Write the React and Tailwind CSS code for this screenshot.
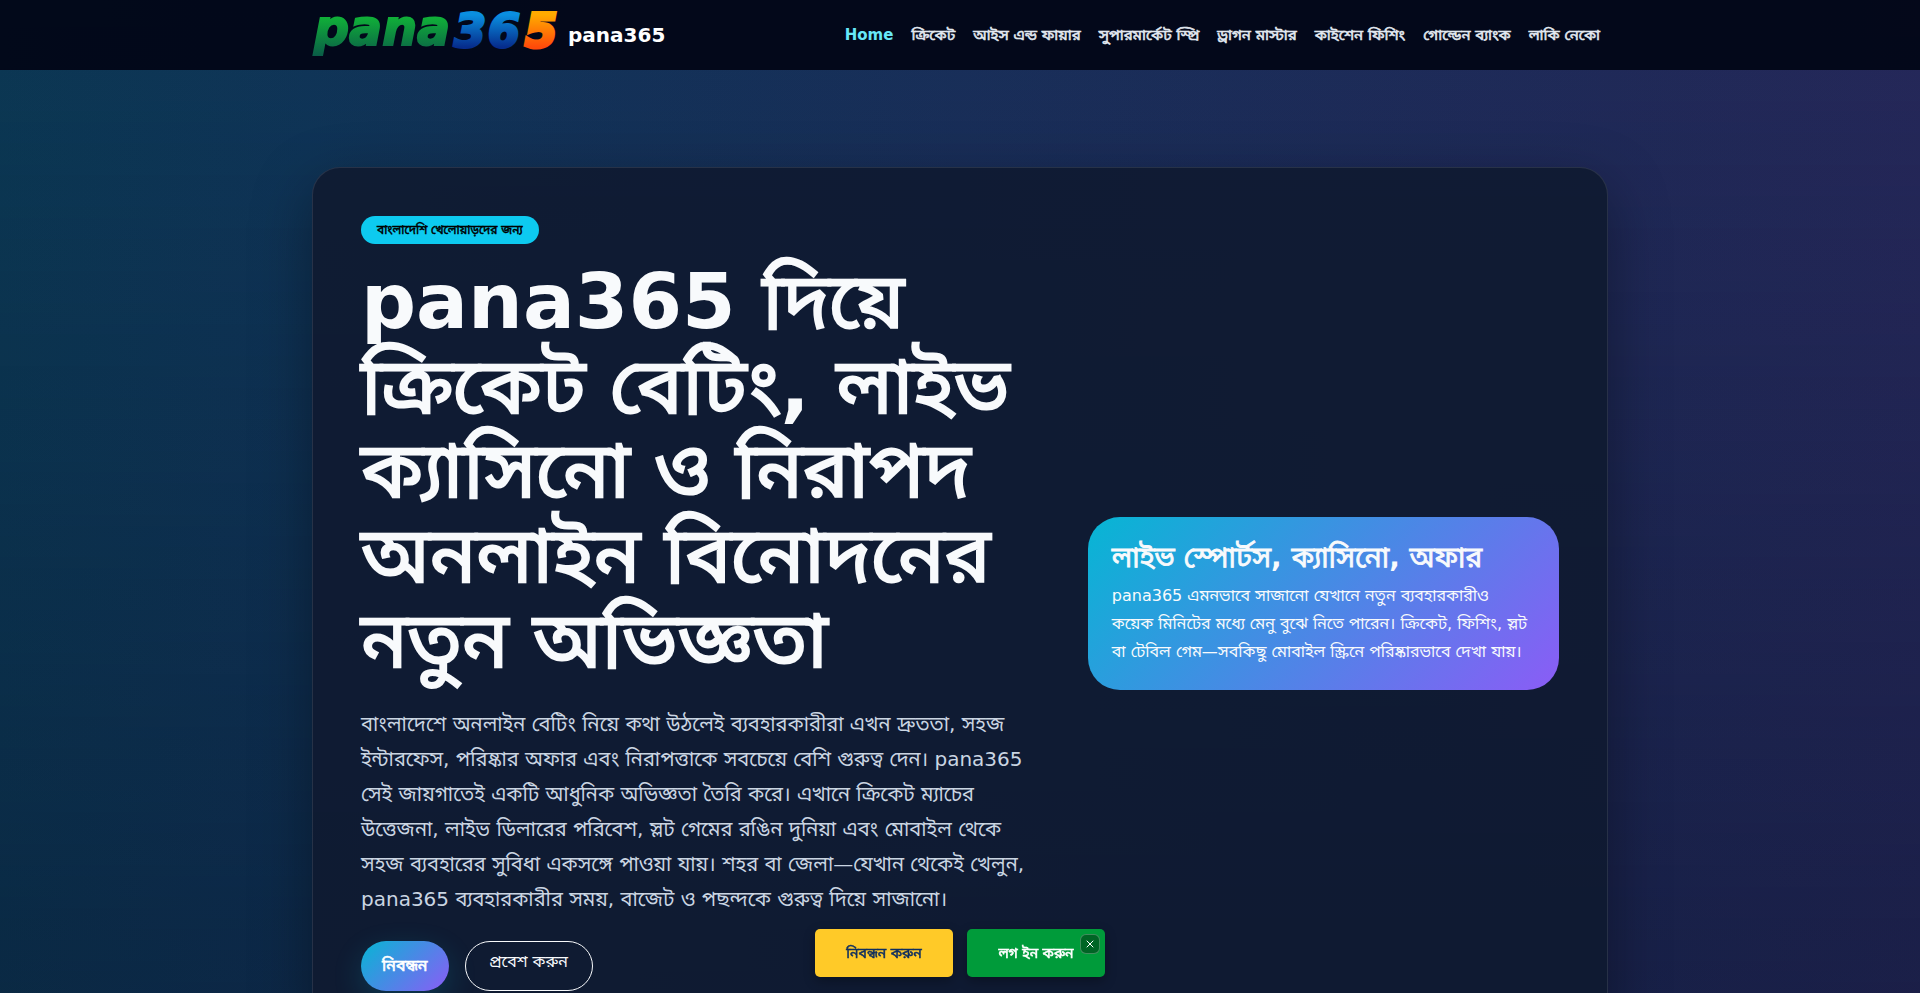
import React from 'react';
import { X } from 'lucide-react';

const navLinks = [
  'ক্রিকেট',
  'আইস এন্ড ফায়ার',
  'সুপারমার্কেট স্প্রি',
  'ড্রাগন মাস্টার',
  'কাইশেন ফিশিং',
  'গোল্ডেন ব্যাংক',
  'লাকি নেকো',
];

// Brand logo, green / blue / orange italic wordmark
const Logo = () => (
  <svg
    width="248"
    height="60"
    viewBox="0 0 248 60"
    className="overflow-visible"
    role="img"
    aria-label="pana365 logo"
  >
    <defs>
      <linearGradient id="logoGreen" x1="0" y1="0" x2="0" y2="1">
        <stop offset="0.3" stopColor="#10b038" />
        <stop offset="1" stopColor="#0a5a48" />
      </linearGradient>
      <linearGradient id="logoBlue" x1="0" y1="0" x2="0" y2="1">
        <stop offset="0.2" stopColor="#0a8fe0" />
        <stop offset="0.8" stopColor="#062c8c" />
      </linearGradient>
      <linearGradient id="logoOrange" x1="0" y1="0" x2="0" y2="1">
        <stop offset="0.2" stopColor="#ffab00" />
        <stop offset="0.8" stopColor="#ff4a0a" />
      </linearGradient>
    </defs>
    <g fontFamily="'DejaVu Sans', sans-serif" fontWeight="700" fontStyle="italic" strokeWidth="2">
      <text x="2" y="40" fontSize="49" fill="url(#logoGreen)" stroke="url(#logoGreen)">pana</text>
      <text x="142" y="42" fontSize="46" strokeWidth="3" fill="url(#logoBlue)" stroke="url(#logoBlue)">3</text>
      <text x="176" y="42" fontSize="46" strokeWidth="3" fill="url(#logoBlue)" stroke="url(#logoBlue)">6</text>
      <text x="213" y="42" fontSize="46" strokeWidth="4" fill="url(#logoOrange)" stroke="url(#logoOrange)">5</text>
    </g>
  </svg>
);

const Header = () => (
  <header className="sticky top-0 z-10 bg-[#020617]/95">
    <div className="mx-auto flex h-[70px] max-w-[1320px] items-center justify-between px-3">
      <a href="#home" className="flex items-center gap-2 text-xl font-bold text-white">
        <Logo />
        <span>pana365</span>
      </a>
      <nav className="flex gap-[2px] text-[15px] text-slate-200">
        <a href="#home" className="p-2 font-bold text-[#67e8f9]">Home</a>
        {navLinks.map((label) => (
          <a key={label} href="#games" className="p-2 [-webkit-text-stroke:0.04em]">{label}</a>
        ))}
      </nav>
    </div>
  </header>
);

const Hero = () => (
  <section className="px-3 pt-[97px] pb-24">
    <div className="mx-auto max-w-[1296px] rounded-[28px] border border-white/10 bg-[#0f1a31]/92 p-12 shadow-[0_20px_60px_rgba(0,0,0,0.35)]">
      <div className="grid grid-cols-12 items-center gap-12">
        <div className="col-span-7">
          <span className="inline-block rounded-full bg-[#0dcaf0] px-4 py-2 text-xs leading-3 text-black [-webkit-text-stroke:0.04em]">
            বাংলাদেশি খেলোয়াড়দের জন্য
          </span>
          <h1 className="mt-4 mb-6 text-[77px] leading-[1.1] [-webkit-text-stroke:0.03em]">
            <span className="font-bold [-webkit-text-stroke:0]">pana365 </span>
            দিয়ে ক্রিকেট বেটিং<b className="[-webkit-text-stroke:0]">, </b>লাইভ ক্যাসিনো ও নিরাপদ
            অনলাইন বিনোদনের নতুন অভিজ্ঞতা
          </h1>
          <p className="mb-6 text-xl leading-[35px] text-slate-300">
            বাংলাদেশে অনলাইন বেটিং নিয়ে কথা উঠলেই ব্যবহারকারীরা এখন দ্রুততা, সহজ ইন্টারফেস, পরিষ্কার
            অফার এবং নিরাপত্তাকে সবচেয়ে বেশি গুরুত্ব দেন। pana365 সেই জায়গাতেই একটি আধুনিক অভিজ্ঞতা
            তৈরি করে। এখানে ক্রিকেট ম্যাচের উত্তেজনা, লাইভ ডিলারের পরিবেশ, স্লট গেমের রঙিন দুনিয়া এবং
            মোবাইল থেকে সহজ ব্যবহারের সুবিধা একসঙ্গে পাওয়া যায়। শহর বা জেলা—যেখান থেকেই খেলুন,
            pana365 ব্যবহারকারীর সময়, বাজেট ও পছন্দকে গুরুত্ব দিয়ে সাজানো।
          </p>
          <div className="flex gap-4">
            <button
              type="button"
              className="h-[50px] rounded-full bg-[linear-gradient(135deg,#06b6d4,#8b5cf6)] px-[21px] text-white shadow-[0_10px_30px_rgba(6,182,212,0.2)] [-webkit-text-stroke:0.04em]"
            >
              নিবন্ধন
            </button>
            <button type="button" className="h-[50px] rounded-full border border-slate-50 px-6 pb-2">
              প্রবেশ করুন
            </button>
          </div>
        </div>
        <div className="col-span-5 rounded-[32px] bg-[linear-gradient(135deg,#06b6d4,#8b5cf6)] p-6">
          <h2 className="mb-2 text-[28px] leading-[33px] [-webkit-text-stroke:0.03em]">
            লাইভ স্পোর্টস<b className="[-webkit-text-stroke:0]">, </b>ক্যাসিনো
            <b className="[-webkit-text-stroke:0]">, </b>অফার
          </h2>
          <p className="leading-7">
            pana365 এমনভাবে সাজানো যেখানে নতুন ব্যবহারকারীও কয়েক মিনিটের মধ্যে মেনু বুঝে নিতে পারেন।
            ক্রিকেট, ফিশিং, স্লট বা টেবিল গেম—সবকিছু মোবাইল স্ক্রিনে পরিষ্কারভাবে দেখা যায়।
          </p>
        </div>
      </div>
    </div>
  </section>
);

// Floating register / login buttons at the bottom of the window
const FloatingActions = () => (
  <div className="fixed inset-x-0 bottom-4 z-20 flex justify-center">
    <div className="relative flex gap-[14px] text-sm">
      <button
        type="button"
        className="h-12 w-[138px] rounded-[5px] bg-[#ffca28] text-[#0f2f5f] shadow-[0_4px_12px_rgba(0,0,0,0.3)] [-webkit-text-stroke:0.04em]"
      >
        নিবন্ধন করুন
      </button>
      <button
        type="button"
        className="h-12 w-[138px] rounded-[5px] bg-[#009b3a] text-white shadow-[0_4px_12px_rgba(0,0,0,0.3)] [-webkit-text-stroke:0.04em]"
      >
        লগ ইন করুন
      </button>
      <button
        type="button"
        aria-label="Close"
        className="absolute top-[5px] right-[5px] flex size-5 items-center justify-center rounded-md border border-white/25 bg-black/35 text-white"
      >
        <X size={12} strokeWidth={2} />
      </button>
    </div>
  </div>
);

const App = () => {
  return (
    <div
      lang="bn"
      className="min-h-screen bg-[linear-gradient(180deg,transparent,rgba(8,15,40,0.42)),linear-gradient(90deg,#0b3854,#0f3558_16%,#192f5a_50%,#202a59_84%,#25285a)] font-['DejaVu_Sans','Noto_Sans_Bengali_UI',sans-serif] text-slate-50"
    >
      <Header />
      <Hero />
      <FloatingActions />
    </div>
  );
};

export default App;
